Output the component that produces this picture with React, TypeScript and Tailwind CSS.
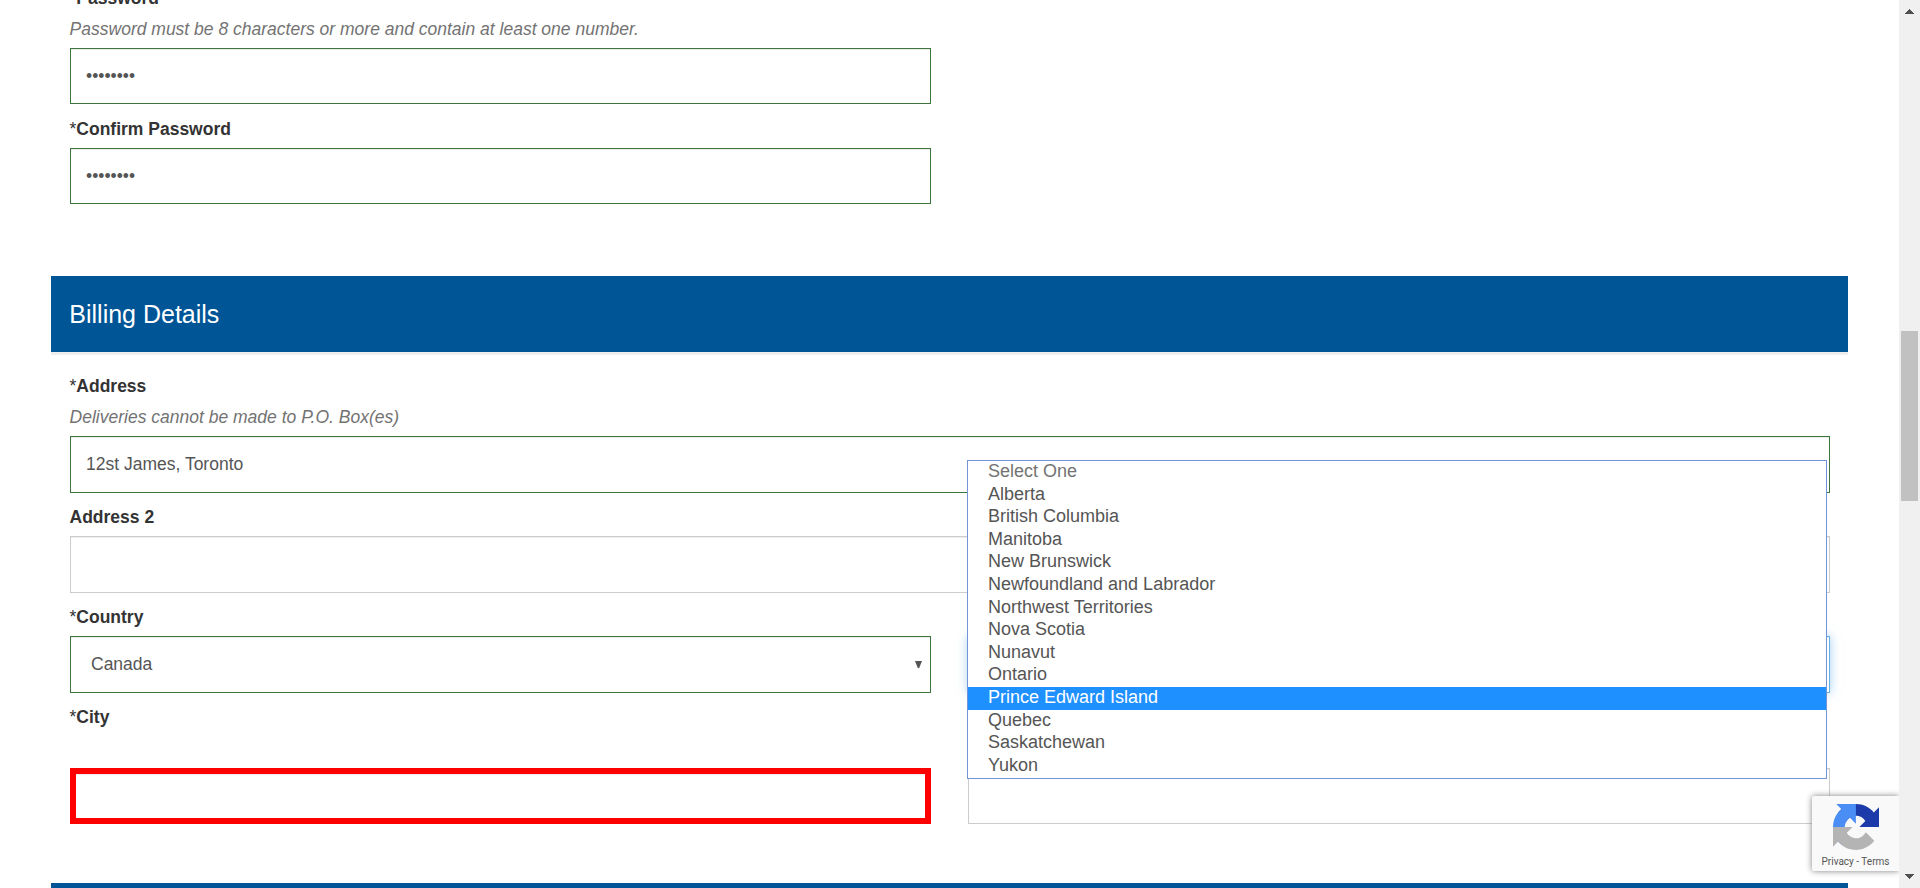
import type { ReactNode } from "react";

const provinces = [
  "Select One",
  "Alberta",
  "British Columbia",
  "Manitoba",
  "New Brunswick",
  "Newfoundland and Labrador",
  "Northwest Territories",
  "Nova Scotia",
  "Nunavut",
  "Ontario",
  "Prince Edward Island",
  "Quebec",
  "Saskatchewan",
  "Yukon",
];
const highlighted = "Prince Edward Island";

function Label({ children, required }: { children: ReactNode; required?: boolean }) {
  return (
    <div className="-ml-[0.5px] h-[25px] leading-[27px] text-[#333]">
      {required && <span>*</span>}
      <span className="font-bold">{children}</span>
    </div>
  );
}

function Hint({ children }: { children: ReactNode }) {
  return <div className="-ml-[0.4px] h-[25px] leading-[27px] text-[#737373] italic">{children}</div>;
}

function Field({ className, children }: { className: string; children?: ReactNode }) {
  return (
    <div className={"flex items-center bg-white text-[#555] shadow-[inset_0_1px_1px_rgba(0,0,0,0.075)] " + className}>
      {children}
    </div>
  );
}

function SectionBar({ children }: { children?: ReactNode }) {
  return (
    <div className="flex h-[79px] shrink-0 items-center border-b-[3px] border-[#eee] bg-[#005596] pt-[2px] pl-[18.3px] text-[25px] text-white">
      {children}
    </div>
  );
}

function ProvinceMenu() {
  return (
    <div className="absolute top-[460px] left-[967px] h-[319px] w-[860px] border border-[#7394d9] bg-white text-[18px] text-[#555]">
      {provinces.map((name) => (
        <div
          key={name}
          className={
            name === highlighted
              ? "h-[22.62px] bg-[#1e90ff] pl-[20px] leading-[20px] text-white"
              : name === "Select One"
                ? "h-[22.62px] pl-[20px] leading-[20px] text-[#737373]"
                : "h-[22.62px] pl-[20px] leading-[20px]"
          }
        >
          {name}
        </div>
      ))}
    </div>
  );
}

function CaptchaBadge() {
  return (
    <div className="absolute top-[796px] left-[1812px] flex h-[75px] w-[87px] flex-col items-center rounded-l-[2px] bg-[#f9f9f9] pt-[8px] shadow-[0_0_6px_gray]">
      <svg viewBox="0 0 64 64" className="ml-[1px] h-[46px] w-[46px]">
        <path
          fill="#1c3aa9"
          d="M64 31.955l-.033-1.37V4.687l-7.16 7.16C50.948 4.674 42.033.093 32.05.093c-10.4 0-19.622 4.96-25.458 12.64l11.736 11.86a15.55 15.55 0 0 1 4.754-5.334c2.05-1.6 4.952-2.906 8.968-2.906.485 0 .86.057 1.135.163 4.976.393 9.288 3.14 11.828 7.124l-8.307 8.307L64 31.953"
        />
        <path
          fill="#4a8ef5"
          d="M31.862.094l-1.37.033H4.594l7.16 7.16C4.58 13.147 0 22.06 0 32.046c0 10.4 4.96 19.622 12.64 25.458L24.5 45.768a15.55 15.55 0 0 1-5.334-4.754c-1.6-2.05-2.906-4.952-2.906-8.968 0-.485.057-.86.163-1.135.393-4.976 3.14-9.288 7.124-11.828l8.307 8.307L31.86.095"
        />
        <path
          fill="#b4b4b4"
          d="M.001 32.045l.033 1.37v25.898l7.16-7.16c5.86 7.173 14.774 11.754 24.76 11.754 10.4 0 19.622-4.96 25.458-12.64l-11.736-11.86a15.55 15.55 0 0 1-4.754 5.334c-2.05 1.6-4.952 2.906-8.968 2.906-.485 0-.86-.057-1.135-.163-4.976-.393-9.288-3.14-11.828-7.124l8.307-8.307c-10.522.04-22.4.066-27.295-.005"
        />
      </svg>
      <div className="mt-[5px] font-[Roboto,sans-serif] text-[10px] leading-[13px] whitespace-nowrap text-[#555]">
        Privacy - Terms
      </div>
    </div>
  );
}

function ScrollBar() {
  return (
    <div className="relative flex w-[21px] shrink-0 flex-col items-center bg-[#f0f0f0]">
      <svg viewBox="0 0 21 21" className="h-[21px] w-[21px]" shapeRendering="crispEdges">
        <path d="M6 14h9l-4.5-5z" fill="#505050" />
      </svg>
      <div className="mt-[310px] h-[170px] w-[17px] bg-[#c1c1c1]" />
      <div className="grow" />
      <svg viewBox="0 0 21 21" className="h-[21px] w-[21px]" shapeRendering="crispEdges">
        <path d="M6 7h9l-4.5 5z" fill="#505050" />
      </svg>
    </div>
  );
}

export default function App() {
  return (
    <div className="relative flex h-[888px] w-[1920px] overflow-hidden bg-white font-['Liberation_Sans',Arial,sans-serif] text-[17.5px]">
      <div className="flex h-[888px] w-[1899px] flex-col overflow-hidden px-[51px]">
        <div className="-mt-[15px] flex w-[880px] shrink-0 flex-col pl-[19px]">
          <Label required>Password</Label>
          <div className="mt-[6px]">
            <Hint>Password must be 8 characters or more and contain at least one number.</Hint>
          </div>
          <Field className="mt-[7px] h-[56px] border border-[#3c763d] pl-[15px]">••••••••</Field>
          <div className="mt-[12px] mb-[7px]">
            <Label required>Confirm Password</Label>
          </div>
          <Field className="h-[56px] border border-[#3c763d] pl-[15px]">••••••••</Field>
        </div>

        <div className="mt-[72px] flex shrink-0 flex-col">
          <SectionBar>Billing Details</SectionBar>
        </div>

        <div className="flex shrink-0 flex-col pt-[18px] pr-[18px] pl-[19px]">
          <Label required>Address</Label>
          <div className="mt-[6px]">
            <Hint>Deliveries cannot be made to P.O. Box(es)</Hint>
          </div>
          <Field className="mt-[7px] h-[57px] border border-[#3c763d] pl-[15px]">12st James, Toronto</Field>
          <div className="mt-[11px] mb-[7px]">
            <Label>Address 2</Label>
          </div>
          <Field className="h-[57px] border border-[#ccc]" />

          <div className="flex justify-between">
            <div className="w-[861px]">
              <div className="mt-[11px] mb-[7px]">
                <Label required>Country</Label>
              </div>
              <Field className="h-[57px] justify-between border border-[#3c763d] pr-[8px] pl-[20px]">
                <span>Canada</span>
                <svg viewBox="0 0 7 7" className="h-[7px] w-[7px]">
                  <path d="M0 0h7L4.2 7H2.8z" fill="#555" />
                </svg>
              </Field>
              <div className="mt-[11px]">
                <Label required>City</Label>
              </div>
              <Field className="mt-[39px] h-[56px] border-[6px] border-[#f00]" />
            </div>
            <div className="w-[862px] pt-[43px]">
              <div className="h-[57px] border border-[#66afe9] bg-white shadow-[inset_0_1px_1px_rgba(0,0,0,0.075),0_0_10px_rgba(102,175,233,0.6)]" />
              <Field className="mt-[75px] h-[56px] border border-[#ccc]" />
            </div>
          </div>
        </div>

        <div className="mt-[59px] flex shrink-0 flex-col">
          <SectionBar />
        </div>
      </div>
      <ProvinceMenu />
      <CaptchaBadge />
      <ScrollBar />
    </div>
  );
}
